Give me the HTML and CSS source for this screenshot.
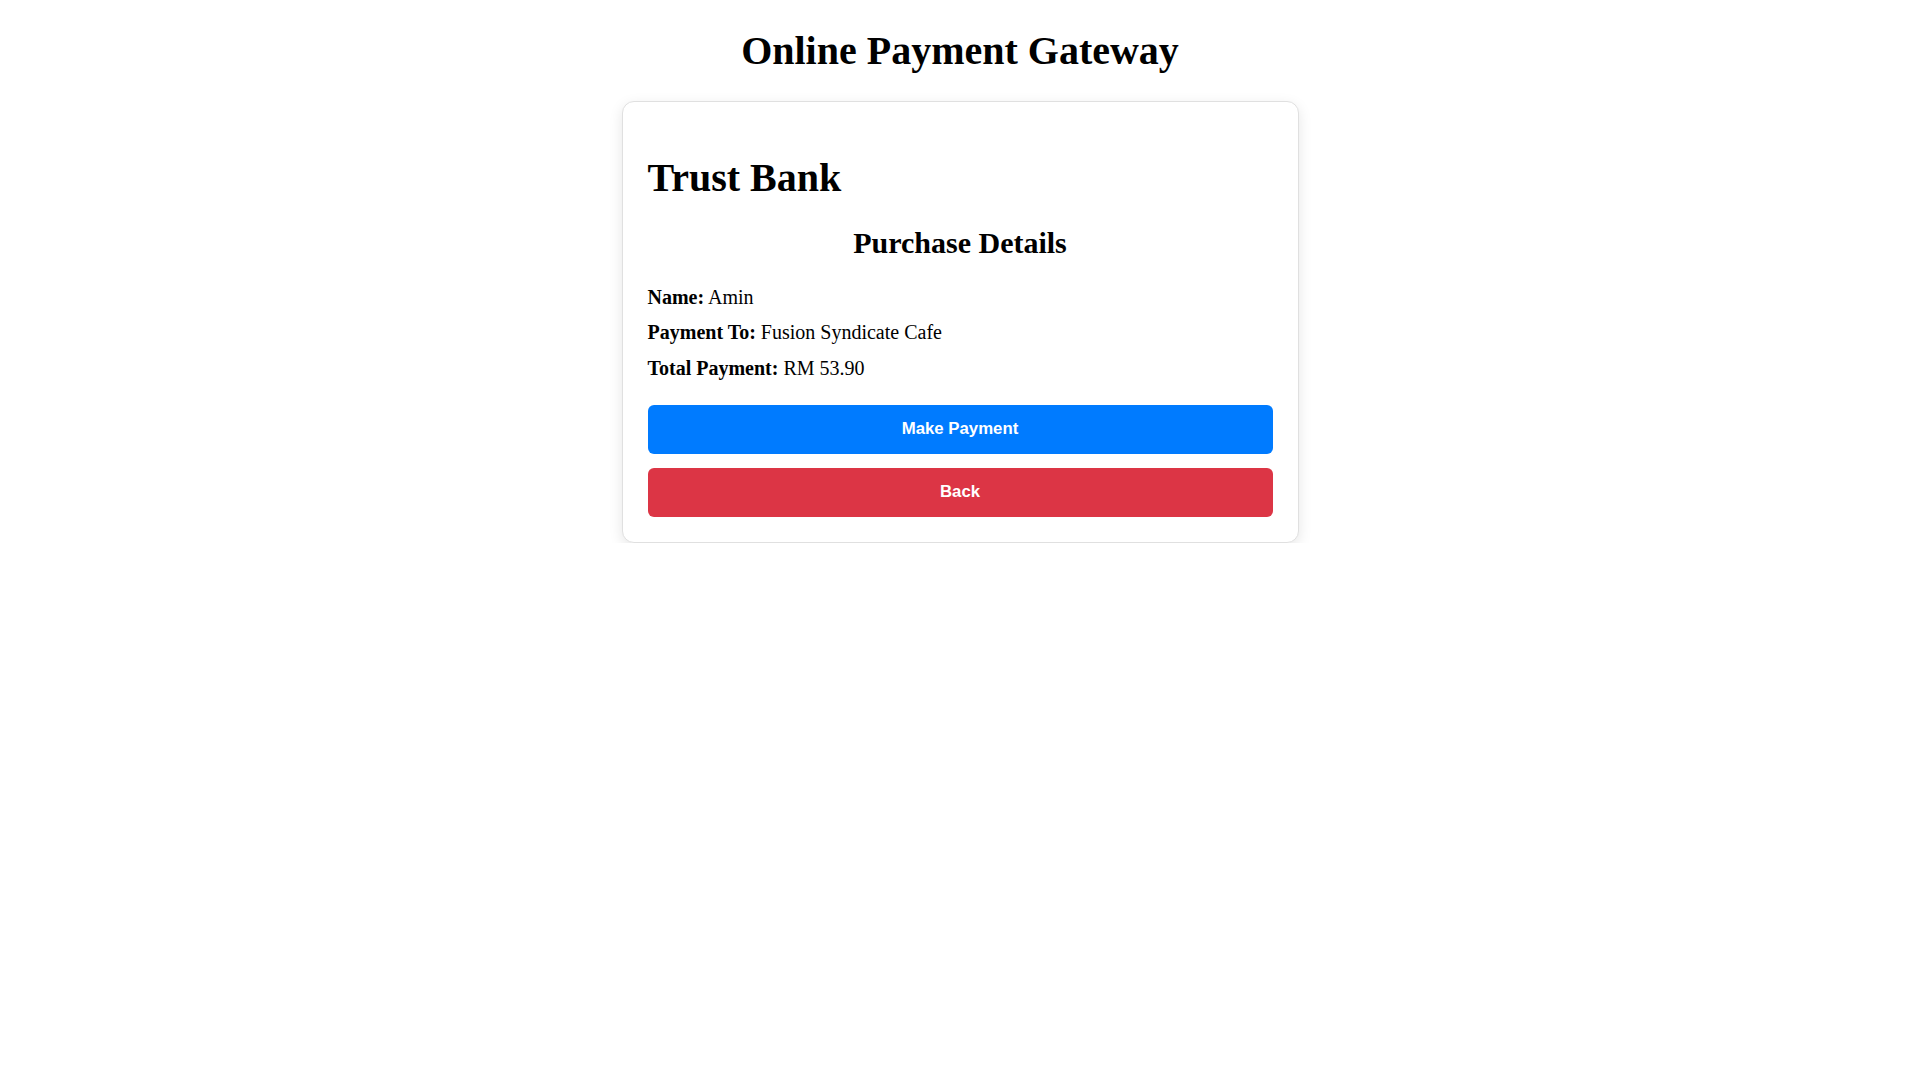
FILE: index.html
```html
<!DOCTYPE html>
<html lang="en">
<head>
<meta charset="utf-8">
<title>Online Payment Gateway</title>
<link rel="stylesheet" href="styles.css">
</head>
<body>
  <h1 class="page-title">Online Payment Gateway</h1>
  <div class="card">
    <h1 class="bank-name">Trust Bank</h1>
    <h2 class="section-title">Purchase Details</h2>
    <p class="detail"><strong>Name:</strong> Amin</p>
    <p class="detail"><strong>Payment To:</strong> Fusion Syndicate Cafe</p>
    <p class="detail"><strong>Total Payment:</strong> RM 53.90</p>
    <div class="actions">
      <button class="btn btn-primary" type="button">Make Payment</button>
      <button class="btn btn-danger" type="button">Back</button>
    </div>
  </div>
</body>
</html>
```

FILE: styles.css
```css
html, body {
  margin: 0;
  padding: 0;
  background: #ffffff;
}

body {
  font-family: "Liberation Serif", "Times New Roman", serif;
  color: #000;
  display: flex;
  flex-direction: column;
  align-items: center;
}

.page-title {
  font-size: 40px;
  line-height: 46px;
  font-weight: bold;
  margin: 27.5px 0 27.5px;
  text-align: center;
}

.card {
  box-sizing: border-box;
  width: 677px;
  padding: 25px;
  border: 1px solid #e0e0e0;
  border-radius: 12px;
  box-shadow: 0 4px 14px rgba(0, 0, 0, 0.1);
  background: #fff;
}

.bank-name {
  font-size: 40px;
  line-height: 46px;
  font-weight: bold;
  margin: 27.5px 0 25px;
}

.section-title {
  font-size: 30px;
  line-height: 34.5px;
  font-weight: bold;
  text-align: center;
  margin: 0 0 25.8px;
}

.detail {
  font-size: 20px;
  line-height: 23px;
  margin: 0 0 12.5px;
}

.detail:last-of-type {
  margin-bottom: 25.2px;
}

.actions {
  display: flex;
  flex-direction: column;
  gap: 14px;
}

.btn {
  display: block;
  width: 100%;
  height: 49px;
  border: none;
  border-radius: 6px;
  color: #fff;
  font-family: "Liberation Sans", Arial, sans-serif;
  font-size: 16.8px;
  font-weight: bold;
  cursor: pointer;
  padding: 0;
}

.btn-primary {
  background: #007bff;
}

.btn-danger {
  background: #dc3545;
}
```
